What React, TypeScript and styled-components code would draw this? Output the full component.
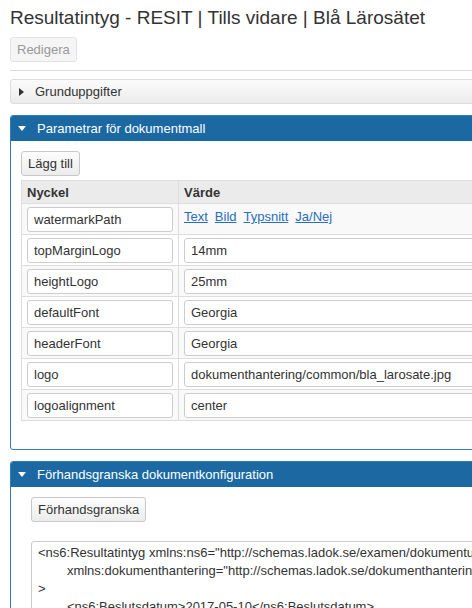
import React from 'react';
import styled, { createGlobalStyle } from 'styled-components';

const GlobalStyle = createGlobalStyle`
  html, body {
    margin: 0;
    padding: 0;
    overflow: hidden;
    background: #fff;
  }
  body {
    font-family: "Liberation Sans", Arial, sans-serif;
    font-size: 13px;
    color: #333;
  }
`;

const Page = styled.div`
  width: 680px;
  padding: 5px 0 0 10px;
  box-sizing: border-box;
`;

const Title = styled.h1`
  margin: 0;
  font-size: 19px;
  font-weight: normal;
  line-height: 26px;
  color: #333;
`;

const Button = styled.button<{ $disabled?: boolean }>`
  display: inline-block;
  height: 25px;
  padding: 0 6px;
  font-family: inherit;
  font-size: 13px;
  line-height: 23px;
  color: ${(p) => (p.$disabled ? '#999' : '#333')};
  background: ${(p) =>
    p.$disabled ? '#f5f5f5' : 'linear-gradient(#fdfdfd, #ececec)'};
  border: 1px solid ${(p) => (p.$disabled ? '#e3e3e3' : '#c8c8c8')};
  border-radius: 3px;
`;

const EditRow = styled.div`
  margin-top: 6px;
`;

const Rule = styled.hr`
  margin: 8px 0 8px;
  border: 0;
  border-top: 1px solid #ddd;
`;

const Collapsed = styled.div`
  display: flex;
  align-items: center;
  height: 23px;
  border: 1px solid #ddd;
  border-radius: 3px;
  background: linear-gradient(#fbfbfb, #ececec);
  padding-left: 8px;
  gap: 11px;
  margin-bottom: 11px;
`;

const Arrow = styled.span<{ $open?: boolean }>`
  display: inline-block;
  width: 0;
  height: 0;
  ${(p) =>
    p.$open
      ? `border-left: 4px solid transparent;
         border-right: 4px solid transparent;
         border-top: 5px solid currentColor;`
      : `border-top: 4px solid transparent;
         border-bottom: 4px solid transparent;
         border-left: 5px solid currentColor;`}
`;

const Panel = styled.section`
  border: 1px solid #2f7db8;
  border-radius: 3px;
  margin-bottom: 11px;
  overflow: hidden;
`;

const PanelHeader = styled.div`
  display: flex;
  align-items: center;
  gap: 11px;
  height: 25px;
  padding-left: 7px;
  background: #1b68a2;
  color: #fff;
`;

const PanelBody = styled.div<{ $inset?: number }>`
  padding: 10px ${(p) => p.$inset ?? 10}px 28px;
`;

const Table = styled.table`
  margin-top: 4px;
  border-collapse: collapse;
  width: 100%;
`;

const HeadCell = styled.th<{ $w?: number }>`
  text-align: left;
  font-weight: bold;
  background: #ebebeb;
  border: 1px solid #ddd;
  height: 22px;
  padding: 0 5px;
  ${(p) => (p.$w ? `width: ${p.$w}px;` : '')}
`;

const Row = styled.tr<{ $odd?: boolean }>`
  background: ${(p) => (p.$odd ? '#f9f9f9' : '#fff')};
`;

const Cell = styled.td`
  border: 1px solid #ddd;
  padding: 3px 5px 2px;
  vertical-align: top;
  height: 25px;
`;

const Input = styled.input`
  display: block;
  width: 100%;
  box-sizing: border-box;
  height: 25px;
  padding: 0 6px;
  font-family: inherit;
  font-size: 13px;
  color: #333;
  background: #fff;
  border: 1px solid #ccc;
  border-radius: 3px;
`;

const Links = styled.div`
  display: flex;
  gap: 7px;
  padding-top: 2px;
`;

const TypeLink = styled.a`
  color: #2a6ebb;
  text-decoration: underline;
  cursor: pointer;
`;

const Code = styled.pre`
  margin: 19px 0 0;
  padding: 2px 6px;
  border: 1px solid #ccc;
  border-radius: 3px;
  font-family: "Liberation Sans", Arial, sans-serif;
  font-size: 13px;
  line-height: 18px;
  color: #333;
  white-space: pre;
`;

const params: [string, string | null][] = [
  ['watermarkPath', null],
  ['topMarginLogo', '14mm'],
  ['heightLogo', '25mm'],
  ['defaultFont', 'Georgia'],
  ['headerFont', 'Georgia'],
  ['logo', 'dokumenthantering/common/bla_larosate.jpg'],
  ['logoalignment', 'center'],
];

const xml = `<ns6:Resultatintyg xmlns:ns6="http://schemas.ladok.se/examen/dokumentutskrift"
        xmlns:dokumenthantering="http://schemas.ladok.se/dokumenthantering"
>
        <ns6:Beslutsdatum>2017-05-10</ns6:Beslutsdatum>`;

export default function App() {
  return (
    <Page>
      <GlobalStyle />
      <Title>Resultatintyg - RESIT | Tills vidare | Blå Lärosätet</Title>
      <EditRow>
        <Button $disabled>Redigera</Button>
      </EditRow>
      <Rule />
      <Collapsed>
        <Arrow />
        Grunduppgifter
      </Collapsed>

      <Panel>
        <PanelHeader>
          <Arrow $open />
          Parametrar för dokumentmall
        </PanelHeader>
        <PanelBody>
          <Button>Lägg till</Button>
          <Table>
            <thead>
              <tr>
                <HeadCell $w={146}>Nyckel</HeadCell>
                <HeadCell>Värde</HeadCell>
              </tr>
            </thead>
            <tbody>
              {params.map(([key, value], i) => (
                <Row key={key} $odd={i % 2 === 0}>
                  <Cell>
                    <Input defaultValue={key} readOnly />
                  </Cell>
                  <Cell>
                    {value === null ? (
                      <Links>
                        <TypeLink>Text</TypeLink>
                        <TypeLink>Bild</TypeLink>
                        <TypeLink>Typsnitt</TypeLink>
                        <TypeLink>Ja/Nej</TypeLink>
                      </Links>
                    ) : (
                      <Input defaultValue={value} readOnly />
                    )}
                  </Cell>
                </Row>
              ))}
            </tbody>
          </Table>
        </PanelBody>
      </Panel>

      <Panel>
        <PanelHeader>
          <Arrow $open />
          Förhandsgranska dokumentkonfiguration
        </PanelHeader>
        <PanelBody $inset={20}>
          <Button>Förhandsgranska</Button>
          <Code>{xml}</Code>
        </PanelBody>
      </Panel>
    </Page>
  );
}
